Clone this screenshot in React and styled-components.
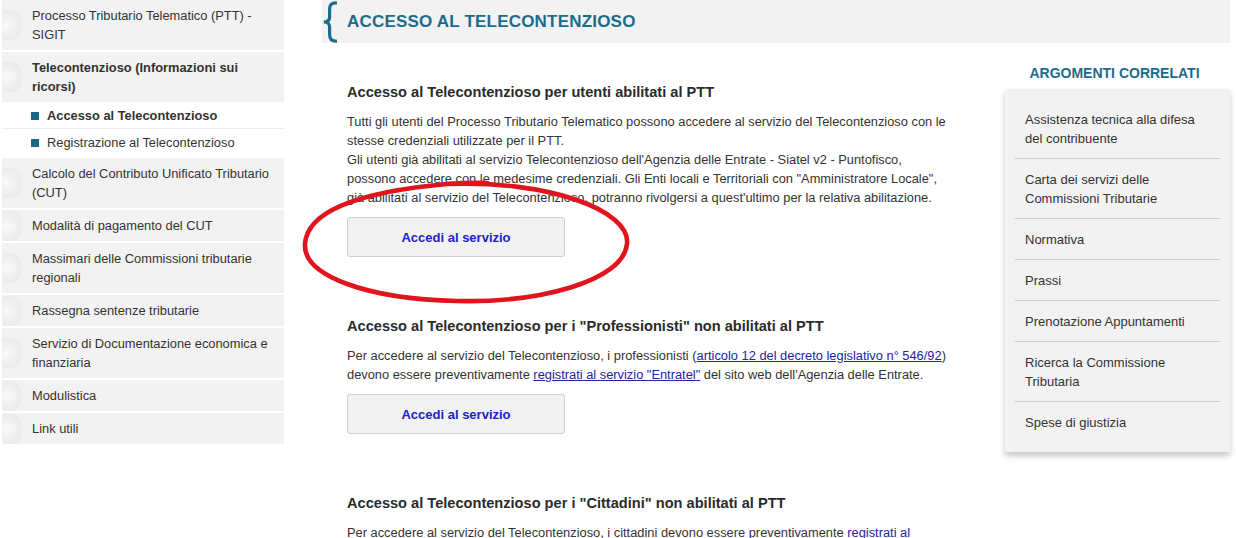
import React from "react";
import styled, { createGlobalStyle } from "styled-components";

const BLUE = "#1d6b8b";
const GREY_BG = "#f2f2f2";

const GlobalStyle = createGlobalStyle`
    body {
        margin: 0;
        background: #fff;
        font-family: "Liberation Sans", Arial, sans-serif;
        color: #333;
    }
`;

const Page = styled.div`
    display: grid;
    grid-template-columns: 282px 1fr;
    column-gap: 38px;
    padding: 0 6px 0 2px;
    height: 538px;
    overflow: hidden;
`;

const Sidebar = styled.nav`
    display: flex;
    flex-direction: column;
    font-size: 12.85px;
    line-height: 19px;
`;

const NavItem = styled.a`
    position: relative;
    display: block;
    padding: 6px 10px 6px 30px;
    background: ${GREY_BG};
    color: #333;
    font-weight: ${(p) => (p.$active ? "bold" : "normal")};
    text-decoration: none;

    &:not(:first-child) {
        margin-top: 2px;
    }

    &::before {
        content: "";
        position: absolute;
        left: 1px;
        top: 50%;
        width: 19px;
        height: 30px;
        transform: translateY(-50%);
        border-radius: 0 50% 50% 0;
        background: radial-gradient(
            ellipse at 20% 50%,
            #f9f9f9 0%,
            #eeeeee 55%,
            rgba(230, 230, 230, 0.6) 75%,
            rgba(242, 242, 242, 0) 100%
        );
    }
`;

const SubItem = styled.a`
    display: flex;
    align-items: center;
    gap: 8px;
    padding: 4px 10px 3px 29px;
    border-bottom: 1px solid ${(p) => (p.$last ? "transparent" : "#ececec")};
    color: #333;
    font-weight: ${(p) => (p.$current ? "bold" : "normal")};
    text-decoration: none;

    &::before {
        content: "";
        width: 8px;
        height: 8px;
        background: #1a6686;
    }
`;

const Main = styled.main`
    display: flex;
    flex-direction: column;
`;

const Header = styled.header`
    display: flex;
    align-items: center;
    height: 43px;
    background: ${GREY_BG};
`;

const Brace = styled.svg`
    width: 15px;
    height: 42px;
    flex: none;
`;

const Title = styled.h1`
    margin: 0 0 0 10px;
    font-size: 17px;
    letter-spacing: 0.2px;
    font-weight: bold;
    color: ${BLUE};
`;

const Body = styled.div`
    display: flex;
    align-items: flex-start;
`;

const Content = styled.div`
    display: flex;
    flex-direction: column;
    gap: 59px;
    width: 640px;
    padding: 39px 0 0 25px;
`;

const Section = styled.section`
    position: relative;
`;

const Heading = styled.h2`
    margin: 0 0 10px;
    font-size: 14.6px;
    line-height: 20px;
    font-weight: bold;
    color: #2b2b2b;
`;

const Text = styled.p`
    margin: 0 0 10px;
    font-size: 12.85px;
    line-height: 19px;
    color: #333;
    white-space: nowrap;
`;

const Link = styled.a`
    color: #2222a8;
    text-decoration: underline;
`;

const ServiceButton = styled.button`
    display: block;
    width: 218px;
    height: 40px;
    border: 1px solid #cfcfcf;
    border-radius: 3px;
    background: ${GREY_BG};
    font-family: inherit;
    font-size: 13px;
    font-weight: bold;
    color: #2020cc;
    cursor: pointer;
`;

const Circle = styled.svg`
    position: absolute;
    left: -50px;
    top: 90px;
    width: 340px;
    height: 136px;
    pointer-events: none;
`;

const Aside = styled.aside`
    width: 225px;
    margin-left: auto;
    padding-top: 22px;
`;

const AsideTitle = styled.h3`
    margin: 0 0 7px;
    font-size: 14px;
    line-height: 17px;
    font-weight: bold;
    text-align: center;
    color: ${BLUE};
    padding-right: 6px;
`;

const AsideBox = styled.ul`
    margin: 0;
    padding: 10px;
    list-style: none;
    background: ${GREY_BG};
    box-shadow: 0 4px 6px rgba(0, 0, 0, 0.22);
`;

const AsideItem = styled.li`
    padding: 11px 10px 10px;
    font-size: 13px;
    line-height: 19px;
    color: #333;
    border-bottom: 1px solid #cccccc;

    &:last-child {
        border-bottom: none;
    }
`;

const related = [
    "Assistenza tecnica alla difesa del contribuente",
    "Carta dei servizi delle Commissioni Tributarie",
    "Normativa",
    "Prassi",
    "Prenotazione Appuntamenti",
    "Ricerca la Commissione Tributaria",
    "Spese di giustizia",
];

function App() {
    return (
        <>
            <GlobalStyle />
            <Page>
                <Sidebar>
                    <NavItem>Processo Tributario Telematico (PTT) - SIGIT</NavItem>
                    <NavItem $active>Telecontenzioso (Informazioni sui ricorsi)</NavItem>
                    <SubItem $current>Accesso al Telecontenzioso</SubItem>
                    <SubItem $last>Registrazione al Telecontenzioso</SubItem>
                    <NavItem>Calcolo del Contributo Unificato Tributario (CUT)</NavItem>
                    <NavItem>Modalità di pagamento del CUT</NavItem>
                    <NavItem>Massimari delle Commissioni tributarie regionali</NavItem>
                    <NavItem>Rassegna sentenze tributarie</NavItem>
                    <NavItem>Servizio di Documentazione economica e finanziaria</NavItem>
                    <NavItem>Modulistica</NavItem>
                    <NavItem>Link utili</NavItem>
                </Sidebar>

                <Main>
                    <Header>
                        <Brace viewBox="0 0 15 42">
                            <path
                                d="M14 1.8 C9.5 1.8 7.6 3.8 7.6 8.5 L7.6 16 C7.6 19.5 5.6 21 1.8 21 C5.6 21 7.6 22.5 7.6 26 L7.6 33.5 C7.6 38.2 9.5 40.2 14 40.2"
                                fill="none"
                                stroke="#1b6c8e"
                                strokeWidth="3.2"
                                strokeLinecap="round"
                            />
                        </Brace>
                        <Title>ACCESSO AL TELECONTENZIOSO</Title>
                    </Header>

                    <Body>
                        <Content>
                            <Section>
                                <Heading>
                                    Accesso al Telecontenzioso per utenti abilitati al PTT
                                </Heading>
                                <Text>
                                    Tutti gli utenti del Processo Tributario Telematico possono accedere al servizio del Telecontenzioso con le
                                    <br />
                                    stesse credenziali utilizzate per il PTT.
                                    <br />
                                    Gli utenti già abilitati al servizio Telecontenzioso dell'Agenzia delle Entrate - Siatel v2 - Puntofisco,
                                    <br />
                                    possono accedere con le medesime credenziali. Gli Enti locali e Territoriali con "Amministratore Locale",
                                    <br />
                                    già abilitati al servizio del Telecontenzioso, potranno rivolgersi a quest'ultimo per la relativa abilitazione.
                                </Text>
                                <ServiceButton>Accedi al servizio</ServiceButton>
                                <Circle viewBox="0 0 340 136">
                                    <path
                                        d="M150 12 C250 8 334 38 330 72 C326 110 240 131 160 129 C70 127 6 104 8 72 C10 40 60 20 150 12 C165 11 175 10 190 11"
                                        fill="none"
                                        stroke="#e1141d"
                                        strokeWidth="4.6"
                                        strokeLinecap="round"
                                    />
                                </Circle>
                            </Section>

                            <Section>
                                <Heading>
                                    Accesso al Telecontenzioso per i "Professionisti" non abilitati al PTT
                                </Heading>
                                <Text>
                                    Per accedere al servizio del Telecontenzioso, i professionisti (
                                    <Link>articolo 12 del decreto legislativo n° 546/92</Link>)
                                    <br />
                                    devono essere preventivamente{" "}
                                    <Link>registrati al servizio "Entratel"</Link> del sito web dell'Agenzia delle Entrate.
                                </Text>
                                <ServiceButton>Accedi al servizio</ServiceButton>
                            </Section>

                            <Section>
                                <Heading>
                                    Accesso al Telecontenzioso per i "Cittadini" non abilitati al PTT
                                </Heading>
                                <Text>
                                    Per accedere al servizio del Telecontenzioso, i cittadini devono essere preventivamente{" "}
                                    <Link>registrati al</Link>
                                </Text>
                            </Section>
                        </Content>

                        <Aside>
                            <AsideTitle>ARGOMENTI CORRELATI</AsideTitle>
                            <AsideBox>
                                {related.map((r) => (
                                    <AsideItem key={r}>{r}</AsideItem>
                                ))}
                            </AsideBox>
                        </Aside>
                    </Body>
                </Main>
            </Page>
        </>
    );
}

export default App;
